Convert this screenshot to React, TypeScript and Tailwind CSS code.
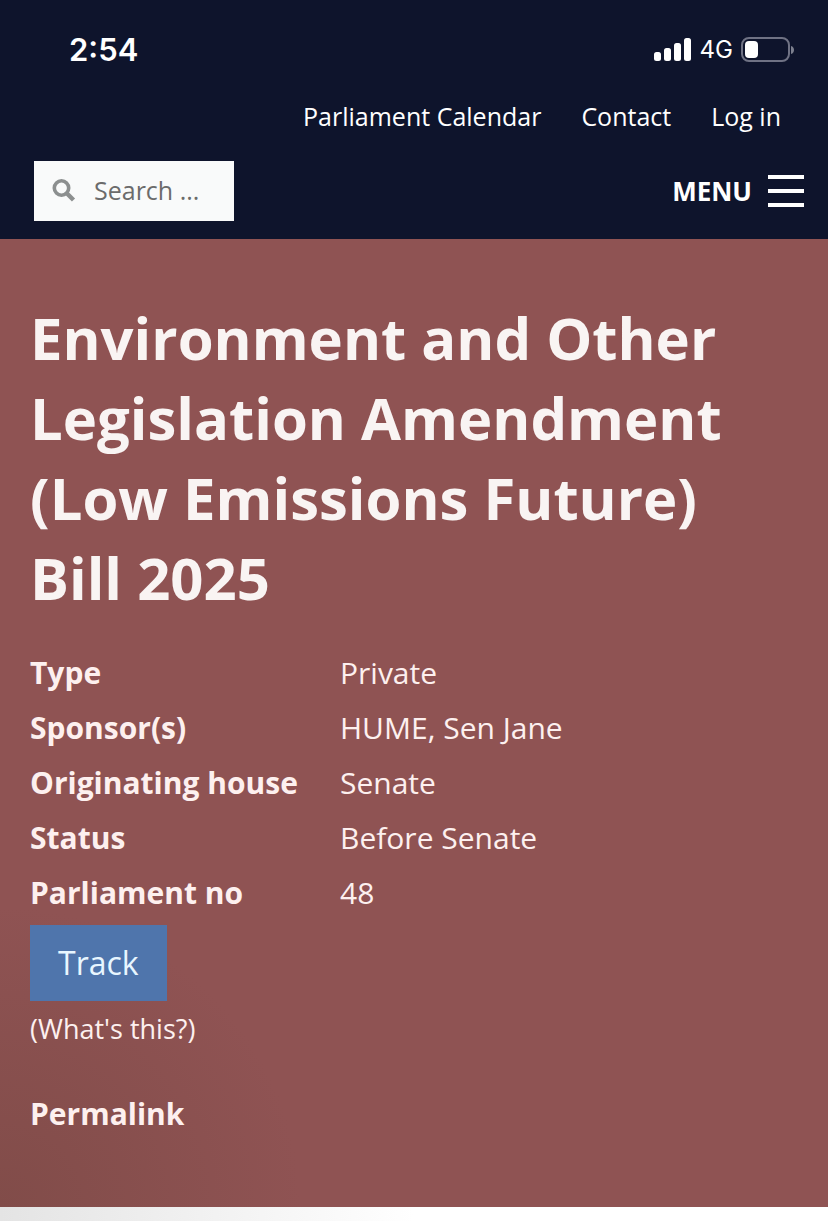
import React from 'react';

interface BillDetail {
  label: string;
  value: string;
}

const details: BillDetail[] = [
  { label: 'Type', value: 'Private' },
  { label: 'Sponsor(s)', value: 'HUME, Sen Jane' },
  { label: 'Originating house', value: 'Senate' },
  { label: 'Status', value: 'Before Senate' },
  { label: 'Parliament no', value: '48' },
];

const StatusBar: React.FC = () => (
  <div className="flex h-[100px] items-center justify-between pl-[69px] pr-[33px] font-['Inter',sans-serif]">
    <span className="text-[31px] leading-10 font-semibold">2:54</span>
    <div className="flex items-center gap-2">
      <svg width="38" height="24" viewBox="0 0 38 24" fill="currentColor" aria-hidden="true">
        <rect x="0" y="14" width="7" height="9" rx="2.5" />
        <rect x="10" y="10" width="7" height="13" rx="2.5" />
        <rect x="20" y="5" width="7" height="18" rx="2.5" />
        <rect x="30" y="0" width="7" height="23" rx="2.5" />
      </svg>
      <span className="text-[24px] leading-8">4G</span>
      <svg width="54" height="26" viewBox="0 0 54 26" fill="none" aria-hidden="true">
        <rect x="1" y="1" width="47" height="23" rx="7" stroke="#6f7284" strokeWidth="2" />
        <rect x="4" y="4" width="13" height="17" rx="4" fill="#fff" />
        <path d="M50 9c4 1 4 7 0 8z" fill="#7c7f8e" />
      </svg>
    </div>
  </div>
);

const Header: React.FC = () => (
  <header className="bg-[#0e142c] pb-[18px] text-white">
    <StatusBar />
    <nav className="flex h-[34px] items-center justify-end gap-10 pr-[47px] text-[25px]">
      <a href="#calendar">Parliament Calendar</a>
      <a href="#contact">Contact</a>
      <a href="#login">Log in</a>
    </nav>
    <div className="mt-[27px] flex items-center justify-between pl-[34px] pr-6">
      <label className="flex h-[60px] w-[200px] items-center gap-[18px] bg-[#f9fafa] pl-[18px]">
        <svg className="shrink-0" width="24" height="26" viewBox="0 0 24 26" fill="none" stroke="#8c8f8f" aria-hidden="true">
          <circle cx="9.5" cy="10" r="7.2" strokeWidth="3.6" />
          <path d="M14.5 15l7 7" strokeWidth="4.4" />
        </svg>
        <input
          type="search"
          aria-label="Search"
          placeholder="Search ..."
          className="w-full min-w-0 bg-transparent text-[25px] text-[#6b6b6b] outline-none placeholder:text-[#6b6b6b]"
        />
      </label>
      <button type="button" className="flex items-center gap-4 text-[26px] font-bold">
        MENU
        <svg width="36" height="32" viewBox="0 0 36 32" fill="currentColor" aria-hidden="true">
          <path d="M0 0h36v4H0zM0 14h36v4H0zM0 28h36v4H0z" />
        </svg>
      </button>
    </div>
  </header>
);

const App: React.FC = () => {
  return (
    <div className="flex min-h-screen flex-col bg-linear-to-r from-[#e4e4e4] to-white to-50% font-['Open_Sans',sans-serif]">
      <Header />
      <main className="bg-[#8f5353] bg-[radial-gradient(circle_at_bottom_left,#814c49,#8f5353_300px)] px-[30px] pt-[59px] pb-[73px] text-[#fdf0ef]">
        <h1 className="max-w-[720px] text-[58px] leading-20 font-bold text-[#f9f4f3]">
          Environment and Other Legislation Amendment (Low Emissions Future) Bill 2025
        </h1>
        <dl className="mt-[27px] grid grid-cols-[310px_1fr] text-[30px] leading-[55px]">
          {details.map((item) => (
            <React.Fragment key={item.label}>
              <dt className="font-bold">{item.label}</dt>
              <dd>{item.value}</dd>
            </React.Fragment>
          ))}
        </dl>
        <button type="button" className="mt-[5px] h-[76px] bg-[#4f75ac] px-7 text-[32px] text-[#e8f6ff]">
          Track
        </button>
        <div className="mt-2">
          <a href="#whats-this" className="text-[27px] leading-10">
            (What's this?)
          </a>
        </div>
        <div className="mt-[45px]">
          <a href="#permalink" className="text-[30px] leading-10 font-bold">
            Permalink
          </a>
        </div>
      </main>
    </div>
  );
};

export default App;
